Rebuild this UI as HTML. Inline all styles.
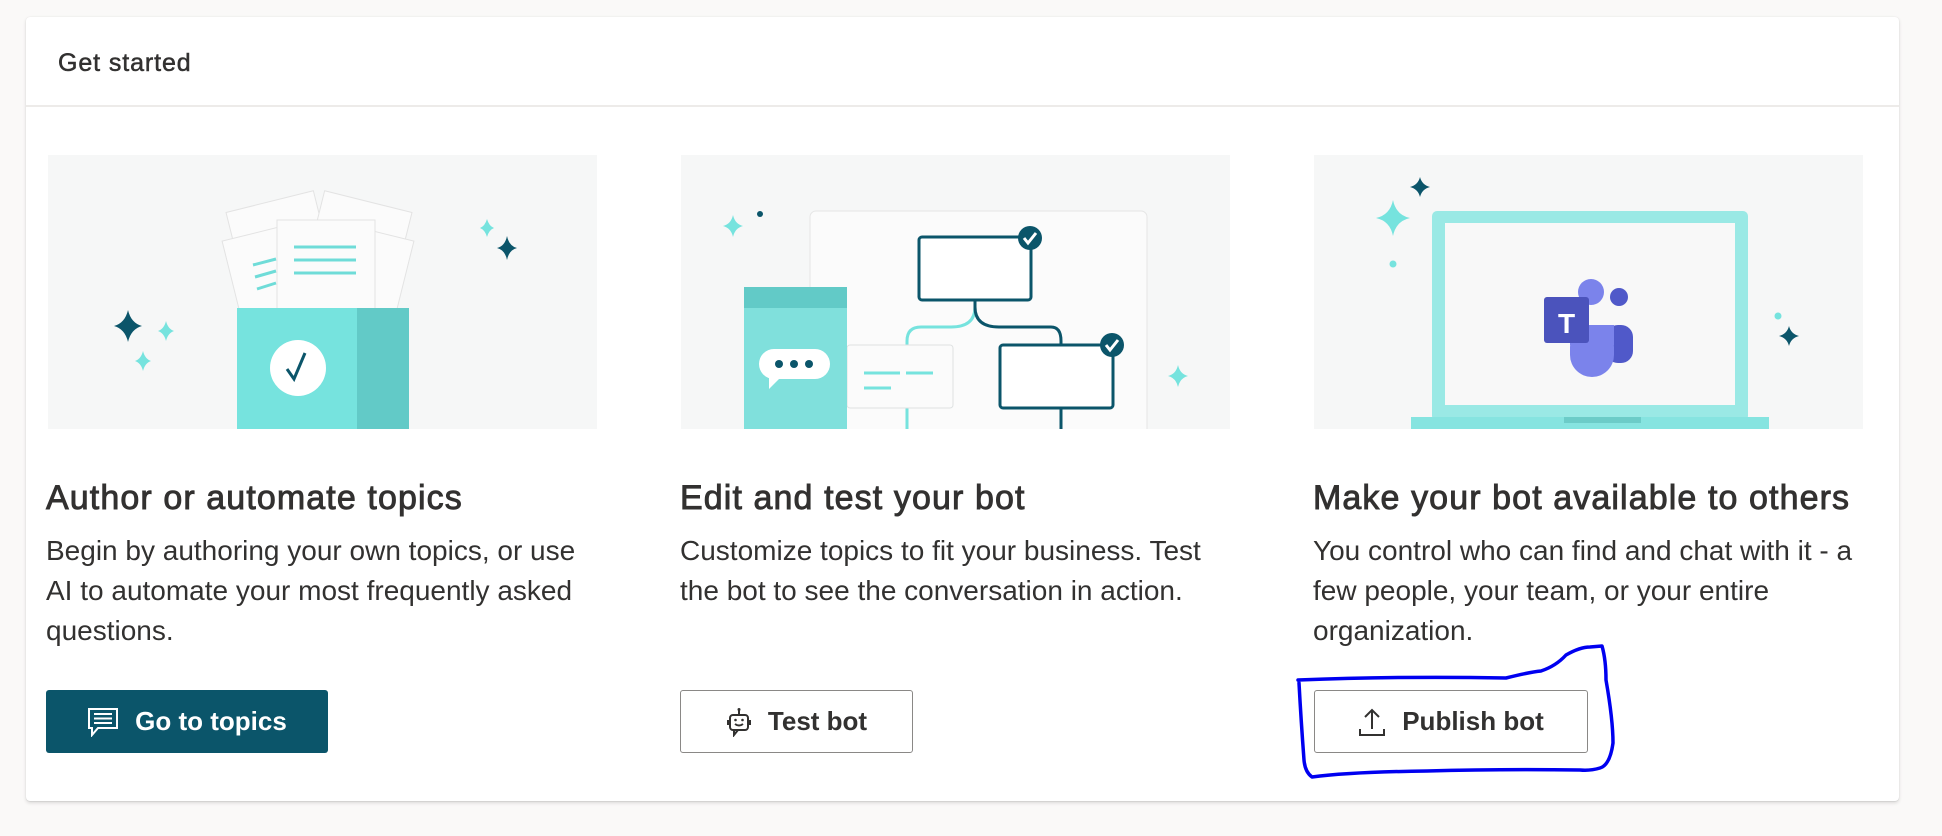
<!DOCTYPE html>
<html><head><meta charset="utf-8"><style>
*{margin:0;padding:0;box-sizing:border-box}
html,body{width:1942px;height:836px;background:#faf9f8;overflow:hidden;font-family:"Liberation Sans",sans-serif;color:#323130}
.card{position:absolute;left:26px;top:17px;width:1873px;height:784px;background:#fff;border-radius:4px;box-shadow:0 1.6px 3.6px rgba(0,0,0,.13),0 0.3px 0.9px rgba(0,0,0,.11)}
.hline{position:absolute;left:26px;top:105px;width:1873px;height:2px;background:#edebe9}
.gs{position:absolute;left:58px;top:48px;font-size:25px;line-height:30px;font-weight:400;color:#323130;-webkit-text-stroke:0.5px #323130;letter-spacing:0.9px}
.img{position:absolute;top:155px;width:549px;height:274px;background:#f6f7f7;overflow:hidden}
.h{position:absolute;top:478px;font-size:34px;line-height:40px;font-weight:400;-webkit-text-stroke:0.9px #323130;color:#323130;white-space:nowrap;letter-spacing:1.1px}
.p{position:absolute;top:531px;font-size:28px;line-height:40px;color:#323130;white-space:nowrap;letter-spacing:0px}
.btn{position:absolute;top:690px;height:63px;border-radius:3px;display:flex;align-items:center;justify-content:center;gap:16px;font-size:26px;font-weight:700}
.prim{background:#0b556a;color:#fff}
.sec{background:#fff;border:1.5px solid #8a8886;color:#323130}
</style></head><body>
<div class="card"></div>
<div class="hline"></div>
<div class="gs">Get started</div>

<div class="img" style="left:48px">
<svg width="549" height="274" viewBox="0 0 549 274">
<g fill="#fbfbfb" stroke="#e3e3e3" stroke-width="1">
<rect x="190" y="45" width="90" height="110" transform="rotate(-14 235 100)"/>
<rect x="262" y="45" width="90" height="110" transform="rotate(14 307 100)"/>
<rect x="185" y="75" width="80" height="100" transform="rotate(-14 225 125)"/>
<rect x="275" y="75" width="80" height="100" transform="rotate(14 315 125)"/>
<rect x="229" y="65" width="98" height="95"/>
</g>
<g stroke="#6fdcd8" stroke-width="3"><line x1="246" y1="92" x2="308" y2="92"/><line x1="246" y1="105" x2="308" y2="105"/><line x1="246" y1="118" x2="308" y2="118"/>
<line x1="205" y1="110" x2="228" y2="104"/><line x1="207" y1="122" x2="228" y2="116"/><line x1="209" y1="134" x2="228" y2="128"/></g>
<rect x="189" y="153" width="172" height="121" fill="#76e3de"/>
<rect x="309" y="153" width="52" height="121" fill="#62cac7"/>
<circle cx="250" cy="213" r="28" fill="#fff"/>
<path d="M239 214 L246 224 L257 198" stroke="#0b556a" stroke-width="3" fill="none"/>
<g fill="#0b556a"><path d="M80 155 Q83 168 94 171 Q83 174 80 187 Q77 174 66 171 Q77 168 80 155Z"/><path d="M459 81 Q461 91 469 93 Q461 95 459 105 Q457 95 449 93 Q457 91 459 81Z"/></g>
<g fill="#76e3de"><path d="M118 166 Q120 174 126 176 Q120 178 118 186 Q116 178 110 176 Q116 174 118 166Z"/><path d="M95 196 Q97 204 103 206 Q97 208 95 216 Q93 208 87 206 Q93 204 95 196Z"/><path d="M439 64 Q441 71 446 73 Q441 75 439 82 Q437 75 432 73 Q437 71 439 64Z"/></g>
</svg></div>

<div class="img" style="left:681px">
<svg width="549" height="274" viewBox="0 0 549 274">
<rect x="129" y="56" width="337" height="230" rx="6" fill="#fbfbfb" stroke="#e6e6e6"/>
<path d="M294 145 V152 Q294 172 270 172 H240 Q226 172 226 186 V274" stroke="#76e3de" stroke-width="3" fill="none"/>
<path d="M294 145 V152 Q294 172 318 172 H370 Q380 172 380 186 V190 M380 253 V274" stroke="#0b556a" stroke-width="3" fill="none"/>
<rect x="166" y="190" width="106" height="63" rx="3" fill="#fbfbfb" stroke="#dfe2e2"/>
<rect x="63" y="132" width="103" height="142" fill="#80e0dc"/>
<rect x="63" y="132" width="103" height="21" fill="#62cac7"/>
<rect x="78" y="194" width="71" height="30" rx="15" fill="#fff"/><path d="M88 220 L88 234 L102 220Z" fill="#fff"/>
<g fill="#0b556a"><circle cx="98" cy="209" r="4"/><circle cx="113" cy="209" r="4"/><circle cx="128" cy="209" r="4"/></g>
<g stroke="#76e3de" stroke-width="3"><line x1="183" y1="218" x2="219" y2="218"/><line x1="225" y1="218" x2="252" y2="218"/><line x1="183" y1="233" x2="210" y2="233"/>
<line x1="251" y1="120" x2="268" y2="120"/><line x1="272" y1="120" x2="296" y2="120"/><line x1="300" y1="120" x2="318" y2="120"/><line x1="251" y1="135" x2="280" y2="135"/><line x1="284" y1="135" x2="301" y2="135"/>
<line x1="333" y1="218" x2="418" y2="218"/><line x1="333" y1="233" x2="373" y2="233"/></g>
<rect x="238" y="82" width="112" height="63" rx="3" fill="#fff" stroke="#0b556a" stroke-width="3"/>
<rect x="319" y="190" width="113" height="63" rx="3" fill="#fff" stroke="#0b556a" stroke-width="3"/>
<circle cx="349" cy="83" r="12" fill="#0b556a"/><path d="M343 83 L347 88 L355 78" stroke="#fff" stroke-width="3" fill="none"/>
<circle cx="431" cy="190" r="12" fill="#0b556a"/><path d="M425 190 L429 195 L437 185" stroke="#fff" stroke-width="3" fill="none"/>
<circle cx="79" cy="59" r="3" fill="#0b556a"/>
<g fill="#76e3de"><path d="M52 60 Q54 69 62 71 Q54 73 52 82 Q50 73 42 71 Q50 69 52 60Z"/><path d="M497 210 Q499 219 507 221 Q499 223 497 232 Q495 223 487 221 Q495 219 497 210Z"/></g>
</svg></div>

<div class="img" style="left:1314px">
<svg width="549" height="274" viewBox="0 0 549 274">
<rect x="118" y="56" width="316" height="210" rx="5" fill="#9ae9e5"/>
<rect x="131" y="68" width="290" height="182" fill="#f8f8f8"/>
<rect x="97" y="262" width="358" height="14" fill="#86e4e0"/>
<rect x="250" y="262" width="77" height="6" fill="#6cccc8"/>
<rect x="292" y="170" width="27" height="38" rx="12" fill="#5059c9"/>
<circle cx="305" cy="142" r="9" fill="#5059c9"/>
<rect x="256" y="170" width="44" height="52" rx="22" fill="#7b83eb"/>
<rect x="256" y="170" width="44" height="20" fill="#7b83eb"/>
<circle cx="277" cy="137" r="13" fill="#7b83eb"/>
<rect x="230" y="142" width="45" height="46" rx="3" fill="#4b53bc"/>
<text x="252.5" y="178" font-family="Liberation Sans" font-weight="700" font-size="28" fill="#fff" text-anchor="middle">T</text>
<g fill="#0b556a"><path d="M106 22 Q108 30 116 32 Q108 34 106 42 Q104 34 96 32 Q104 30 106 22Z"/><path d="M475 171 Q477 179 485 181 Q477 183 475 191 Q473 183 465 181 Q473 179 475 171Z"/></g>
<g fill="#76e3de"><path d="M79 45 Q82 60 96 63 Q82 66 79 81 Q76 66 62 63 Q76 60 79 45Z"/><circle cx="79" cy="109" r="3.5"/><circle cx="464" cy="161" r="3.5"/></g>
</svg></div>

<div class="h" style="left:46px">Author or automate topics</div>
<div class="p" style="left:46px">Begin by authoring your own topics, or use<br>AI to automate your most frequently asked<br>questions.</div>
<div class="h" style="left:680px">Edit and test your bot</div>
<div class="p" style="left:680px">Customize topics to fit your business. Test<br>the bot to see the conversation in action.</div>
<div class="h" style="left:1313px">Make your bot available to others</div>
<div class="p" style="left:1313px">You control who can find and chat with it - a<br>few people, your team, or your entire<br>organization.</div>

<div class="btn prim" style="left:46px;width:282px">
<svg width="32" height="30" viewBox="0 0 32 30"><path d="M2 2 H30 V21 H11 L5 28 V21 H2Z" fill="none" stroke="#fff" stroke-width="2"/><g stroke="#fff" stroke-width="2"><line x1="7" y1="7" x2="25" y2="7"/><line x1="7" y1="11.5" x2="25" y2="11.5"/><line x1="7" y1="16" x2="25" y2="16"/></g></svg>
<span>Go to topics</span></div>

<div class="btn sec" style="left:680px;width:233px">
<svg width="26" height="30" viewBox="0 0 26 30"><g fill="none" stroke="#323130" stroke-width="2"><line x1="13" y1="3" x2="13" y2="8"/><rect x="4" y="8" width="18" height="15" rx="3"/><path d="M8 23 V28 L12 23"/><path d="M9 17 Q13 20 17 17"/><line x1="2" y1="13" x2="2" y2="18"/><line x1="24" y1="13" x2="24" y2="18"/></g><circle cx="13" cy="2.5" r="1.5" fill="#323130"/><circle cx="9.5" cy="13" r="1.3" fill="#323130"/><circle cx="16.5" cy="13" r="1.3" fill="#323130"/></svg>
<span>Test bot</span></div>

<div class="btn sec" style="left:1314px;width:274px">
<svg width="28" height="30" viewBox="0 0 28 30"><g fill="none" stroke="#323130" stroke-width="2"><line x1="14" y1="3" x2="14" y2="22"/><path d="M7 10 L14 3 L21 10"/><path d="M2 22 V28 H26 V22"/></g></svg>
<span>Publish bot</span></div>

<svg style="position:absolute;left:0;top:0" width="1942" height="836"><path d="M1298 680 Q1400 676 1506 678 Q1530 672 1541 671 Q1556 666 1566 655 Q1580 647 1590 647 L1602 646 Q1606 660 1606 680 Q1613 720 1613 743 Q1610 765 1600 768 Q1590 771 1580 770 Q1500 769 1427 771 Q1350 772 1312 777 Q1305 772 1304 760 Q1301 720 1299 683" fill="none" stroke="#0000f0" stroke-width="3.5" stroke-linejoin="round" stroke-linecap="round"/></svg>
</body></html>
